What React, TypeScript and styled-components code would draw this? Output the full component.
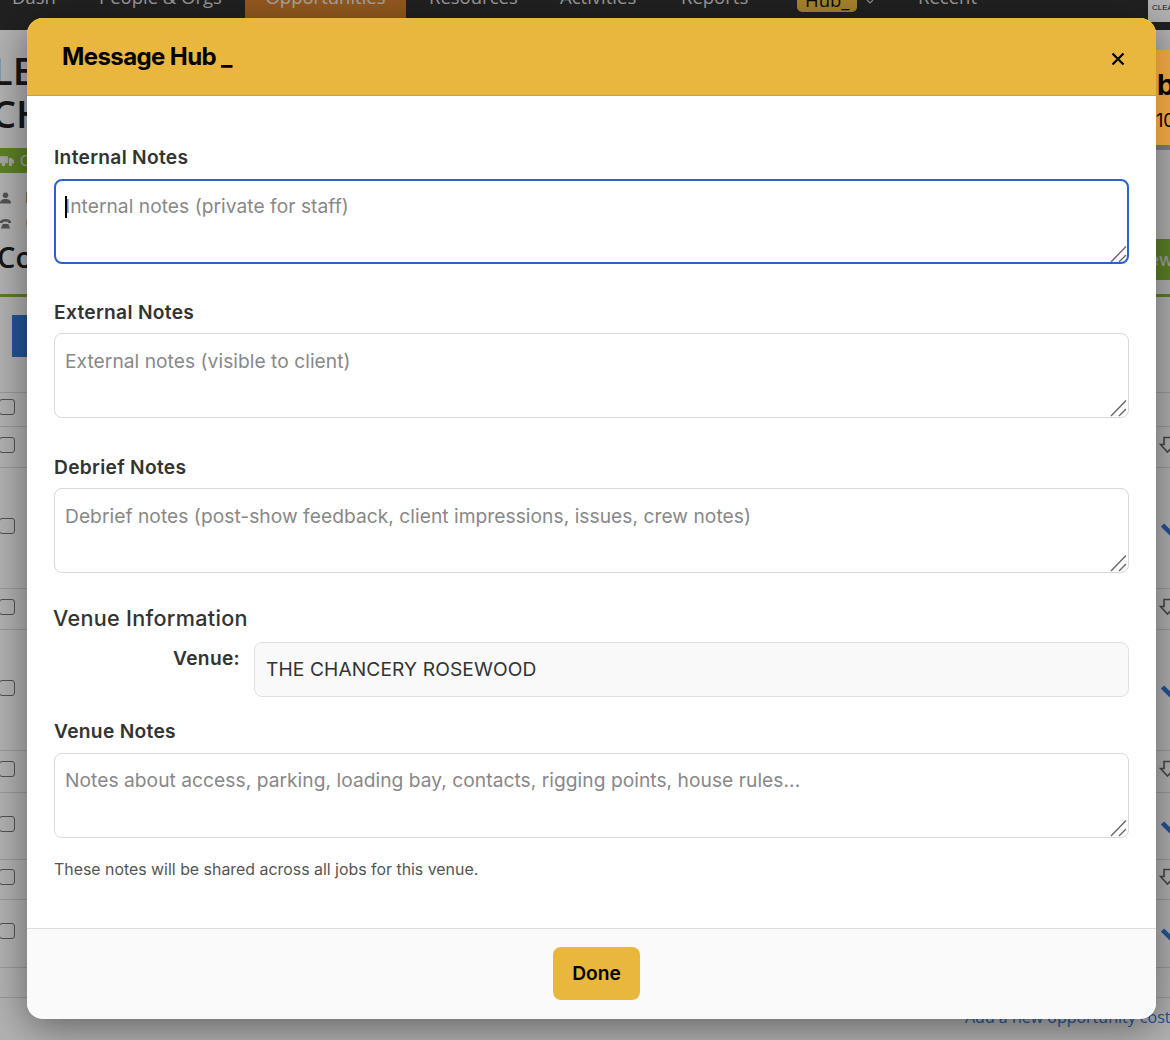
import React from "react";
import styled, { createGlobalStyle } from "styled-components";

const Global = createGlobalStyle`
  html, body { margin: 0; padding: 0; height: 1040px; overflow: hidden; background: #fff; }
  * { box-sizing: border-box; }
  body { font-family: Inter, "Liberation Sans", sans-serif; color: #333; }
`;

const Page = styled.div`
  position: relative;
  width: 1170px;
  height: 1040px;
  overflow: hidden;
  background: #fff;
`;

const Nav = styled.nav`
  height: 30px;
  background: #303030;
  display: flex;
  align-items: flex-start;
  overflow: hidden;
  padding-left: 12px;
  font-family: "Open Sans", sans-serif;
  font-size: 18.5px;
  color: #ddd;
`;

const NavItem = styled.div<{ $w: number; $active?: boolean }>`
  width: ${(p) => p.$w}px;
  height: 30px;
  flex: none;
  display: flex;
  align-items: flex-end;
  padding-bottom: 21px;
  line-height: 24px;
  white-space: nowrap;
  ${(p) => (p.$active ? "background:#d6812f;justify-content:center;color:#eee;" : "")}
`;

const HubCell = styled.div`
  width: 121px;
  height: 12px;
  flex: none;
  display: flex;
  align-items: flex-end;
  gap: 9px;
`;

const HubBadge = styled.span`
  width: 60px;
  height: 22px;
  background: #f1be45;
  color: #111;
  border-radius: 5px;
  padding-left: 8px;
  line-height: 20px;
  flex: none;
`;

const HubChevron = styled.svg`
  flex: none;
  margin-bottom: 8px;
`;

const LogoBox = styled.div`
  margin-left: auto;
  width: 22px;
  height: 22px;
  background: #fff;
  color: #222;
  font-size: 8px;
  font-family: "Liberation Sans", sans-serif;
  line-height: 9px;
  padding: 3px 0 0 4px;
  overflow: hidden;
`;

const TopArea = styled.div`
  height: 267px;
  display: flex;
  justify-content: space-between;
  background: #fff;
  border-bottom: 3px solid #83b733;
`;

const TopLeft = styled.div`
  width: 100px;
  padding-top: 19px;
  display: flex;
  flex-direction: column;
  overflow: hidden;
`;

const BigTitle = styled.div`
  font-family: "Open Sans", sans-serif;
  font-size: 38px;
  font-weight: 600;
  line-height: 43px;
  color: #222;
  margin-left: -8px;
  white-space: nowrap;
`;

const StatusPill = styled.div`
  margin: 13px 0 12px;
  height: 25px;
  width: 60px;
  background: #86bb35;
  color: #eee;
  display: flex;
  align-items: center;
  gap: 6px;
  font-size: 14px;
  white-space: nowrap;
`;

const Contact = styled.div`
  height: 25px;
  display: flex;
  align-items: center;
  gap: 14px;
  color: #777;
  font-size: 15px;
  white-space: nowrap;
`;

const SubTitle = styled.div`
  font-family: "Open Sans", sans-serif;
  font-size: 29px;
  font-weight: 600;
  line-height: 40px;
  color: #222;
  margin: 2px 0 0 -3px;
`;

const TopRight = styled.div`
  width: 120px;
  padding-top: 20px;
  display: flex;
  flex-direction: column;
  align-items: flex-end;
`;

const OrangeCard = styled.div`
  position: relative;
  z-index: 2;
  width: 14px;
  height: 95px;
  background: linear-gradient(90deg, #d4953a, #e09d3e);
  padding: 19px 0 0 1px;
  font-weight: 700;
  font-size: 28px;
  line-height: 32px;
  color: #000;
  overflow: hidden;
`;

const OrangeSub = styled.div`
  font-size: 18px;
  font-weight: 400;
  line-height: 20px;
  margin: 10px 0 0 -1px;
`;

const CardEdge = styled.div`
  width: 120px;
  height: 5px;
  background: #bbb;
`;

const GreenBtn = styled.div`
  margin-top: 89px;
  width: 120px;
  height: 41px;
  background: #86bb35;
  color: #eee;
  font-size: 18px;
  line-height: 41px;
  padding-left: 85px;
  overflow: hidden;
  white-space: nowrap;
`;

const ToolRow = styled.div`
  height: 96px;
  padding: 18px 0 0 12px;
  border-bottom: 1px solid #ddd;
`;

const BlueBtn = styled.div`
  width: 80px;
  height: 42px;
  background: #337ade;
`;

const Row = styled.div<{ $h: number }>`
  height: ${(p) => p.$h}px;
  display: flex;
  align-items: center;
  justify-content: space-between;
  border-bottom: 1px solid #ddd;
`;

const Check = styled.span`
  width: 16px;
  height: 16px;
  margin: 0 0 5px -1px;
  border: 1px solid #767676;
  border-radius: 3px;
  background: #fff;
  flex: none;
`;

const RowIcon = styled.span<{ $w: number }>`
  display: flex;
  flex: none;
  width: ${(p) => p.$w}px;
  margin-bottom: 5px;
`;

const AddLink = styled.div`
  padding: 8px 0 0 965px;
  font-family: "Open Sans", sans-serif;
  font-size: 16px;
  color: #337ade;
  white-space: nowrap;
`;

const Overlay = styled.div`
  position: absolute;
  z-index: 1;
  inset: 0;
  background: rgba(0, 0, 0, 0.3);
  padding: 18px 14px 21px 27px;
`;

const Modal = styled.div`
  width: 1129px;
  height: 1001px;
  background: #fff;
  border-radius: 16px;
  overflow: hidden;
  display: flex;
  flex-direction: column;
  box-shadow: 0 8px 40px rgba(0, 0, 0, 0.45);
`;

const Header = styled.header`
  height: 78px;
  flex: none;
  background: #e9b73e;
  border-bottom: 1px solid #c9a04a;
  display: flex;
  align-items: center;
  justify-content: space-between;
  padding: 0 28px 0 35px;
`;

const Title = styled.h2`
  margin: 0;
  font-size: 24px;
  font-weight: 700;
  line-height: 30px;
  color: #000;
  letter-spacing: -0.6px;
`;

const CloseBtn = styled.button`
  border: 0;
  background: none;
  padding: 0;
  margin-top: 4px;
  width: 20px;
  height: 20px;
  display: flex;
  align-items: center;
  justify-content: center;
  color: #000;
`;

const Body = styled.div`
  flex: 1;
  padding: 50px 27px 0 27px;
  display: flex;
  flex-direction: column;
`;

const FieldLabel = styled.label<{ $gap?: number }>`
  display: block;
  font-size: 19.2px;
  font-weight: 600;
  letter-spacing: 0.3px;
  line-height: 22px;
  color: #333;
  margin-bottom: ${(p) => p.$gap ?? 11}px;
`;

const FieldGroup = styled.div<{ $mb?: number }>`
  margin-bottom: ${(p) => p.$mb ?? 0}px;
`;

const AreaWrap = styled.div`
  position: relative;
`;

const Area = styled.textarea<{ $focused?: boolean }>`
  display: block;
  width: 100%;
  height: 85px;
  resize: none;
  font-family: Inter, "Liberation Sans", sans-serif;
  font-size: 19.2px;
  letter-spacing: 0.04px;
  line-height: 24px;
  padding: ${(p) => (p.$focused ? "13px 9px" : "15px 10px")};
  border: ${(p) => (p.$focused ? "2.5px solid #2b62c9" : "1px solid #d9d9d9")};
  border-radius: 8px;
  outline: none;
  background: #fff;
  color: #333;
  &::placeholder { color: #888; opacity: 1; }
`;

const VenueNotesArea = styled(Area)`
  padding-top: 14px;
`;

const Caret = styled.span`
  position: absolute;
  left: 11px;
  top: 17px;
  width: 1.5px;
  height: 22px;
  background: #000;
`;

const GripSvg = styled.svg`
  position: absolute;
  right: 0;
  bottom: 0;
  pointer-events: none;
`;

const Grip = () => (
  <GripSvg width="20" height="20" viewBox="0 0 20 20" fill="none" stroke="#666" strokeWidth="1.4">
    <path d="M2 18L17 2.5M10 18l7-7" />
  </GripSvg>
);

const SectionHeading = styled.h3`
  margin: 0 0 12px -1px;
  font-size: 21.6px;
  font-weight: 500;
  letter-spacing: 0.3px;
  line-height: 24px;
  color: #333;
`;

const VenueRow = styled.div`
  display: flex;
  gap: 14px;
  margin-bottom: 23px;
`;

const VenueLabel = styled.div`
  width: 186px;
  flex: none;
  text-align: right;
  font-size: 19.2px;
  font-weight: 600;
  letter-spacing: 0.3px;
  line-height: 22px;
  padding-top: 5px;
  color: #333;
`;

const VenueValue = styled.div`
  flex: 1;
  height: 55px;
  background: #f9f9f9;
  border: 1px solid #e0e0e0;
  border-radius: 8px;
  padding: 0 10px 2px 11px;
  display: flex;
  align-items: center;
  font-size: 19.2px;
  letter-spacing: 0.1px;
  color: #333;
`;

const Help = styled.p`
  margin: 22px 0 0;
  font-size: 15.9px;
  line-height: 20px;
  color: #555;
`;

const Footer = styled.footer`
  height: 91px;
  flex: none;
  background: #fafafa;
  border-top: 1px solid #ddd;
  display: flex;
  justify-content: center;
  padding: 18px 0 0 10px;
`;

const DoneBtn = styled.button`
  width: 87px;
  height: 53px;
  border: 0;
  border-radius: 8px;
  background: #e9b73e;
  color: #000;
  font-family: Inter, "Liberation Sans", sans-serif;
  font-size: 19.2px;
  font-weight: 600;
  padding: 0 0 2px;
`;

const DownIcon = () => (
  <svg width="17" height="18" viewBox="0 0 17 18" fill="none" stroke="#666" strokeWidth="1.6" style={{ flex: "none" }}>
    <path d="M5 1.5h7v7h3.5L8.5 16 1.5 8.5H5z" />
  </svg>
);

const TickIcon = () => (
  <svg width="30" height="24" viewBox="0 0 30 24" fill="none" stroke="#337ade" strokeWidth="4.5" style={{ flex: "none" }}>
    <path d="M1.5 11l10 10L28 2" />
  </svg>
);

type RowDef = { h: number; icon?: "down" | "tick"; check?: boolean };

const rows: RowDef[] = [
  { h: 34, check: true },
  { h: 41, icon: "down", check: true },
  { h: 121, icon: "tick", check: true },
  { h: 41, icon: "down", check: true },
  { h: 121, icon: "tick", check: true },
  { h: 42, icon: "down", check: true },
  { h: 67, icon: "tick", check: true },
  { h: 40, icon: "down", check: true },
  { h: 68, icon: "tick", check: true },
  { h: 30 },
];

export default function App() {
  return (
    <Page>
      <Global />
      <Nav>
        <NavItem $w={87}>Dash</NavItem>
        <NavItem $w={146}>People &amp; Orgs</NavItem>
        <NavItem $w={161} $active>Opportunities</NavItem>
        <NavItem $w={23} />
        <NavItem $w={131}>Resources</NavItem>
        <NavItem $w={121}>Activities</NavItem>
        <NavItem $w={116}>Reports</NavItem>
        <HubCell>
          <HubBadge>Hub_</HubBadge>
          <HubChevron width="8" height="5" viewBox="0 0 8 5" fill="none" stroke="#ccc" strokeWidth="1.2">
            <path d="M1 1l3 3 3-3" />
          </HubChevron>
        </HubCell>
        <NavItem $w={120}>Recent</NavItem>
        <LogoBox>CLEAR</LogoBox>
      </Nav>
      <TopArea>
        <TopLeft>
          <BigTitle>LEADER</BigTitle>
          <BigTitle>CHANCERY</BigTitle>
          <StatusPill>
            <svg width="14" height="12" viewBox="0 0 16 13" fill="#eee" style={{ flex: "none" }}>
              <path d="M0 1h9v8H0zM10 3h3l3 3v3h-6z" />
              <circle cx="4" cy="10.5" r="2" />
              <circle cx="12" cy="10.5" r="2" />
            </svg>
            Confirmed
          </StatusPill>
          <Contact>
            <svg width="11" height="12" viewBox="0 0 12 12" fill="#777" style={{ flex: "none" }}>
              <circle cx="6" cy="3" r="3" />
              <path d="M0 12c0-4 3-5 6-5s6 1 6 5z" />
            </svg>
            Name
          </Contact>
          <Contact>
            <svg width="11" height="12" viewBox="0 0 12 12" fill="#777" style={{ flex: "none" }}>
              <path d="M0 4c3-3 9-3 12 0v2H9V4.5H3V6H0zM3 7h6l2 5H1z" />
            </svg>
            (020)
          </Contact>
          <SubTitle>Costs</SubTitle>
        </TopLeft>
        <TopRight>
          <OrangeCard>
            bb
            <OrangeSub>10</OrangeSub>
          </OrangeCard>
          <CardEdge />
          <GreenBtn>New</GreenBtn>
        </TopRight>
      </TopArea>
      <ToolRow>
        <BlueBtn />
      </ToolRow>
      {rows.map((r, i) => (
        <Row key={i} $h={r.h}>
          {r.check ? <Check /> : <span />}
          {r.icon === "down" && <RowIcon $w={11}><DownIcon /></RowIcon>}
          {r.icon === "tick" && <RowIcon $w={9}><TickIcon /></RowIcon>}
        </Row>
      ))}
      <AddLink>Add a new opportunity cost</AddLink>

      <Overlay>
        <Modal>
          <Header>
            <Title>Message Hub _</Title>
            <CloseBtn aria-label="Close">
              <svg width="14" height="14" viewBox="0 0 14 14" stroke="#000" strokeWidth="2.2" fill="none">
                <path d="M1.5 1.5l11 11M12.5 1.5l-11 11" />
              </svg>
            </CloseBtn>
          </Header>
          <Body>
            <FieldGroup $mb={37}>
              <FieldLabel>Internal Notes</FieldLabel>
              <AreaWrap>
                <Area $focused placeholder="Internal notes (private for staff)" />
                <Caret />
                <Grip />
              </AreaWrap>
            </FieldGroup>
            <FieldGroup $mb={38}>
              <FieldLabel $gap={10}>External Notes</FieldLabel>
              <AreaWrap>
                <Area placeholder="External notes (visible to client)" />
                <Grip />
              </AreaWrap>
            </FieldGroup>
            <FieldGroup $mb={33}>
              <FieldLabel $gap={10}>Debrief Notes</FieldLabel>
              <AreaWrap>
                <Area placeholder="Debrief notes (post-show feedback, client impressions, issues, crew notes)" />
                <Grip />
              </AreaWrap>
            </FieldGroup>
            <SectionHeading>Venue Information</SectionHeading>
            <VenueRow>
              <VenueLabel>Venue:</VenueLabel>
              <VenueValue>THE CHANCERY ROSEWOOD</VenueValue>
            </VenueRow>
            <FieldGroup>
              <FieldLabel>Venue Notes</FieldLabel>
              <AreaWrap>
                <VenueNotesArea placeholder="Notes about access, parking, loading bay, contacts, rigging points, house rules..." />
                <Grip />
              </AreaWrap>
            </FieldGroup>
            <Help>These notes will be shared across all jobs for this venue.</Help>
          </Body>
          <Footer>
            <DoneBtn>Done</DoneBtn>
          </Footer>
        </Modal>
      </Overlay>
    </Page>
  );
}
